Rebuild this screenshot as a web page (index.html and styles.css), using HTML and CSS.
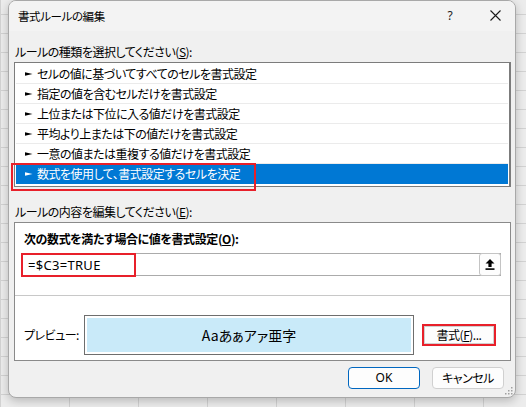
FILE: index.html
```html
<!DOCTYPE html>
<html lang="ja">
<head>
<meta charset="utf-8">
<title>書式ルールの編集</title>
<link rel="stylesheet" href="styles.css">
</head>
<body>
<div class="dialog">
  <div class="titlebar">
    <span class="title">書式ルールの編集</span>
    <span class="help">?</span>
    <span class="close"><svg width="11" height="11" viewBox="0 0 11 11"><path d="M0.5 0.5L10.5 10.5M10.5 0.5L0.5 10.5" stroke="#1a1a1a" stroke-width="1.1" fill="none"/></svg></span>
  </div>
  <div class="content">
    <div class="label">ルールの種類を選択してください(<u>S</u>):</div>
    <ul class="rules">
      <li><svg class="bullet" width="8" height="6" viewBox="0 0 8 6"><path d="M0 1.2L7.5 3L0 4.8Z"/></svg><span>セルの値に基づいてすべてのセルを書式設定</span></li>
      <li><svg class="bullet" width="8" height="6" viewBox="0 0 8 6"><path d="M0 1.2L7.5 3L0 4.8Z"/></svg><span>指定の値を含むセルだけを書式設定</span></li>
      <li><svg class="bullet" width="8" height="6" viewBox="0 0 8 6"><path d="M0 1.2L7.5 3L0 4.8Z"/></svg><span>上位または下位に入る値だけを書式設定</span></li>
      <li><svg class="bullet" width="8" height="6" viewBox="0 0 8 6"><path d="M0 1.2L7.5 3L0 4.8Z"/></svg><span>平均より上または下の値だけを書式設定</span></li>
      <li><svg class="bullet" width="8" height="6" viewBox="0 0 8 6"><path d="M0 1.2L7.5 3L0 4.8Z"/></svg><span>一意の値または重複する値だけを書式設定</span></li>
      <li class="selected"><svg class="bullet" width="8" height="6" viewBox="0 0 8 6"><path d="M0 1.2L7.5 3L0 4.8Z"/></svg><span>数式を使用して、書式設定するセルを決定</span></li>
    </ul>
    <div class="label label-edit">ルールの内容を編集してください(<u>E</u>):</div>
    <div class="editbox">
      <div class="bold-label">次の数式を満たす場合に値を書式設定(<u>O</u>):</div>
      <div class="formula">
        <span class="formula-text">=$C3=TRUE</span>
        <span class="hl-formula"></span>
        <span class="collapse"><svg width="10" height="11" viewBox="0 0 10 11"><path d="M5 0L9.5 4.6H6.6V8H3.4V4.6H0.5Z" fill="#000"/><rect x="0.5" y="9.3" width="9" height="1.6" fill="#000"/></svg></span>
      </div>
      <div class="sep"></div>
      <div class="preview-row">
        <span class="preview-label">プレビュー:</span>
        <div class="preview"><div class="preview-inner">Aaあぁアァ亜字</div></div>
        <span class="format-btn">書式(<u>F</u>)...</span>
      </div>
    </div>
    <div class="buttons">
      <span class="btn ok">OK</span>
      <span class="btn cancel">キャンセル</span>
    </div>
  </div>
  <svg class="grip" width="8" height="8" viewBox="0 0 8 8"><g fill="#a0a0a0"><rect x="6" y="0" width="1.5" height="1.5"/><rect x="3" y="3" width="1.5" height="1.5"/><rect x="6" y="3" width="1.5" height="1.5"/><rect x="0" y="6" width="1.5" height="1.5"/><rect x="3" y="6" width="1.5" height="1.5"/><rect x="6" y="6" width="1.5" height="1.5"/></g></svg>
</div>
</body>
</html>
```
FILE: styles.css
```css
html, body {
  margin: 0;
  padding: 0;
}
body {
  width: 526px;
  height: 407px;
  overflow: hidden;
  background-color: #ececec;
  background-image:
    linear-gradient(#d2d2d2 1px, transparent 1px),
    linear-gradient(90deg, #d2d2d2 1px, transparent 1px);
  background-size: 64px 19px, 69px 19px;
  background-position: 0 14px, 0 0;
  font-family: "Noto Sans CJK JP", sans-serif;
  font-size: 12px;
  letter-spacing: -0.5px;
  color: #000;
  font-feature-settings: "palt";
}
.dialog {
  position: relative;
  margin-left: 8px;
  width: 508px;
  height: 398px;
  box-sizing: border-box;
  border: 1px solid #a8a8a8;
  border-radius: 8px;
  background: #f0f0f0;
  overflow: hidden;
  box-shadow: 0 3px 10px rgba(0,0,0,0.22);
  display: flex;
  flex-direction: column;
}
.titlebar {
  height: 30px;
  flex: none;
  background: #f3f3f3;
  display: flex;
  align-items: center;
  padding-left: 9px;
  padding-bottom: 1px;
  box-sizing: border-box;
}
.title {
  font-size: 11.5px;
  line-height: 16px;
  letter-spacing: -0.4px;
}
.help {
  margin-left: auto;
  width: 40px;
  text-align: center;
  font-family: "Noto Sans", sans-serif;
  font-size: 12px;
  letter-spacing: 0;
  color: #1a1a1a;
}
.close {
  margin-left: 5px;
  width: 40px;
  display: flex;
  justify-content: center;
  align-items: center;
}
.content {
  flex: 1;
  padding: 13px 4px 0 5px;
}
.label {
  line-height: 16px;
  height: 16px;
  padding-left: 1px;
}
.label-edit {
  margin-top: 17px;
}
u {
  text-decoration: underline;
  text-underline-offset: 1px;
}
.rules {
  list-style: none;
  margin: 2px 0 0;
  padding: 1px 1px 2px;
  background: #fff;
  border: 1px solid #7c7c7c;
  border-right-width: 2px;
  border-bottom-width: 1px;
}
.rules li {
  position: relative;
  height: 20px;
  box-sizing: border-box;
  border-bottom: 1px solid #ebebeb;
  display: flex;
  align-items: center;
  padding-left: 9px;
  line-height: 16px;
}
.rules li.selected {
  border-bottom: 0;
  background: #0078d4;
  color: #fff;
}
.bullet {
  fill: #000;
  margin-right: 4px;
  flex: none;
}
.selected .bullet {
  fill: #fff;
}
.rules li.selected::after {
  content: "";
  position: absolute;
  left: -5px;
  top: -1px;
  width: 245px;
  height: 28px;
  box-sizing: border-box;
  border: 2px solid #e8202a;
}
.editbox {
  margin-top: 2px;
  background: #fff;
  border: 1px solid #8a8a8a;
  padding: 8px 9px 5px 6px;
}
.bold-label {
  font-weight: bold;
  line-height: 16px;
  margin-left: 3px;
  letter-spacing: -0.4px;
}
.formula {
  position: relative;
  margin-top: 6px;
  height: 23px;
  box-sizing: border-box;
  border: 1px solid #ababab;
  display: flex;
  align-items: center;
}
.formula-text {
  padding-left: 6px;
  font-family: "Noto Sans", sans-serif;
  font-size: 13px;
  letter-spacing: 0.3px;
}
.hl-formula {
  position: absolute;
  left: -1px;
  top: -1px;
  width: 115px;
  height: 24px;
  box-sizing: border-box;
  border: 2px solid #e8202a;
}
.collapse {
  margin: -1px -1px -1px auto;
  width: 22px;
  height: 23px;
  box-sizing: border-box;
  border: 1px solid #c4c4c4;
  border-radius: 3px;
  background: #fdfdfd;
  display: flex;
  align-items: center;
  justify-content: center;
}
.sep {
  height: 1px;
  background: #c8c8c8;
  margin: 19px -9px 19px -6px;
}
.preview-row {
  display: flex;
  align-items: flex-start;
  height: 40px;
}
.preview-label {
  width: 60px;
  margin-left: 3px;
  line-height: 40px;
}
.preview {
  width: 330px;
  height: 40px;
  box-sizing: border-box;
  border: 1px solid #6e6e6e;
  padding: 2px;
  background: #fff;
}
.preview-inner {
  height: 100%;
  background: #c9eaf9;
  display: flex;
  align-items: center;
  justify-content: center;
  font-size: 14px;
  letter-spacing: 0;
}
.format-btn {
  margin: 9px 0 0 8px;
  width: 74px;
  height: 22px;
  box-sizing: border-box;
  border: 2px solid #e8202a;
  box-shadow: inset 0 0 0 1px #d0d0d0;
  background: #fdfdfd;
  display: flex;
  align-items: center;
  justify-content: center;
  line-height: 16px;
}
.buttons {
  margin-top: 6px;
  display: flex;
  justify-content: flex-end;
  gap: 12px;
  padding-right: 7px;
}
.btn {
  width: 72px;
  height: 22px;
  box-sizing: border-box;
  border-radius: 4px;
  background: #fdfdfd;
  display: flex;
  align-items: center;
  justify-content: center;
  line-height: 16px;
}
.ok {
  border: 1px solid #0067c0;
  font-family: "Noto Sans", sans-serif;
  letter-spacing: 0;
}
.cancel {
  border: 1px solid #d0d0d0;
}
.grip {
  position: absolute;
  right: 2px;
  bottom: 2px;
}
```
